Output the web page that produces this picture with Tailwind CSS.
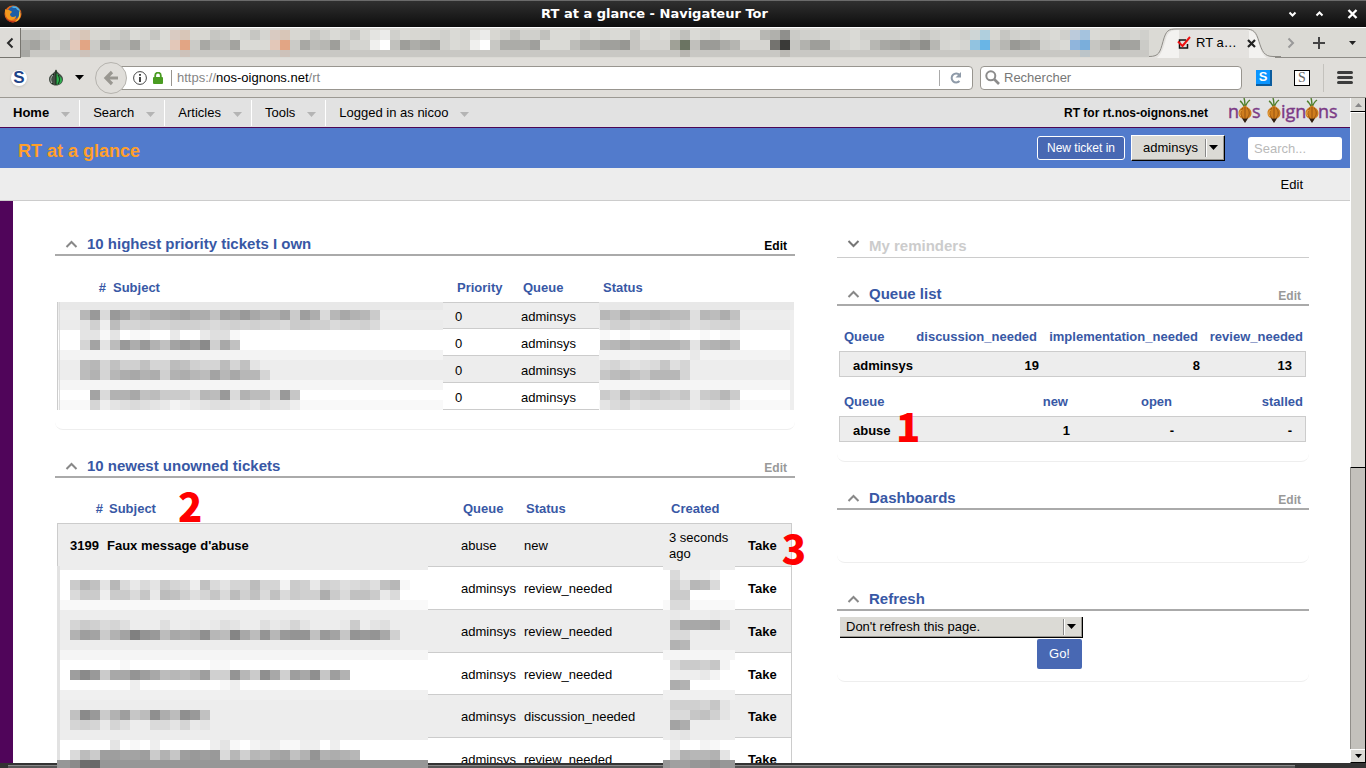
<!DOCTYPE html>
<html lang="fr">
<head>
<meta charset="utf-8">
<title>RT at a glance</title>
<script src="https://cdn.jsdelivr.net/npm/@tailwindcss/browser@4"></script>
</head>
<body class="flex h-screen flex-col overflow-hidden bg-white font-['Liberation_Sans',Arial,sans-serif] text-[13px] leading-4 text-black">

<!-- Window title bar -->
<header class="flex h-[27px] shrink-0 items-center border-t border-[#6b6b6b] bg-linear-to-b from-[#303030] to-[#0e0e0e] pr-2 pl-1">
  <svg class="size-[18px]" viewBox="0 0 18 18" aria-hidden="true">
    <circle cx="9" cy="9" r="8.5" fill="#e2691b"/>
    <circle cx="10" cy="7.500" r="6.300" fill="#1d5fa8"/>
    <path d="M7 2c3-2 8 0 9 4-2-1-3-1-4-3-1 0-3 0-5-1z" fill="#4fb4e8"/>
    <path d="M1 4c1 1 2 1 4 1 1 1 3 1 3 2l-2 2c0 3 3 4 6 2 0 3-3 4-5 4-4 0-6-4-6-11z" fill="#f39a1e"/>
    <path d="M15 5c3 5 1 11-5 12 3-1 6-4 5-12z" fill="#fbd23c"/>
    <path d="M2 12c2 4 6 5 10 4-3 3-9 1-10-4z" fill="#b92d16"/>
  </svg>
  <h1 class="grow text-center font-['DejaVu_Sans',sans-serif] text-[13px] font-bold text-white">RT at a glance - Navigateur Tor</h1>
  <div class="flex items-center gap-4 text-white">
    <button aria-label="Réduire"><svg class="h-3 w-[11px]" viewBox="0 0 11 12" fill="none" stroke="currentColor" stroke-width="2"><path d="M2.500 4.500 5.500 7.500 8.500 4.500"/></svg></button>
    <button aria-label="Agrandir"><svg class="h-3 w-[11px]" viewBox="0 0 11 12" fill="none" stroke="currentColor" stroke-width="2"><path d="M2.500 7.500 5.500 4.500 8.500 7.500"/></svg></button>
    <button class="ml-1.5" aria-label="Fermer"><svg class="h-3 w-[11px]" viewBox="0 0 11 12" fill="none" stroke="currentColor" stroke-width="2.400"><path d="M1.500 2 9.500 10M9.500 2 1.500 10"/></svg></button>
  </div>
</header>

<!-- Tab strip -->
<div class="relative flex h-[31px] shrink-0 border-t border-white bg-[#dbdad5]">
  <button class="flex w-[21px] shrink-0 items-center justify-center border-r border-b border-[#77756f] bg-[#dedcd8]" aria-label="Onglets précédents">
    <svg class="h-3 w-2" viewBox="0 0 8 12" fill="none" stroke="#2b2b2b" stroke-width="2"><path d="M6.500 1.500 2 6l4.500 4.500"/></svg>
  </button>
  <svg id="tabs" class="mt-0.5 h-[27px] w-[1128px] shrink-0" viewBox="21 30 1128 27" shape-rendering="crispEdges" aria-hidden="true"></svg>
  <div class="relative flex h-[30px] w-[126px] shrink-0 items-center pl-7">
    <svg class="absolute inset-0 h-[30px] w-[132px]" viewBox="0 0 132 30" aria-hidden="true">
      <path d="M0 28.500c10 0 11-4 14-15S19 1 28 1h68c9 0 11 3 14 12.500s5 15 14 15V30H0z" fill="#e4e2df"/>
      <path d="M8 30c5-4 7-12 9-19 1-5 4-9 11-9h2v28zM96 2c9 0 11 4 13 11s4 14 9 17h-18V2z" fill="#f3f2f0"/>
      <path d="M0 28.500c10 0 11-4 14-15S19 1 28 1h68c9 0 11 3 14 12.500s5 15 14 15h8" fill="none" stroke="#8e8c87"/>
    </svg>
    <svg class="relative size-3.5" viewBox="0 0 14 14" fill="none" aria-hidden="true"><path d="M9 4H2.500v8h8V8" stroke="#111" stroke-width="1.500"/><path d="M1 5.500 5.500 10 13 1" stroke="#e11" stroke-width="2"/></svg>
    <span class="relative ml-[5px] text-[13px]">RT a…</span>
    <button class="relative ml-2.5" aria-label="Fermer l’onglet"><svg class="size-[9px]" viewBox="0 0 9 9" stroke="#222" stroke-width="2.200"><path d="M1 1l7 7M8 1 1 8"/></svg></button>
  </div>
  <div class="relative flex grow items-center justify-end gap-[18px] border-b border-[#8e8c87] pr-2.5">
    <svg class="h-3 w-2" viewBox="0 0 8 12" fill="none" stroke="#999" stroke-width="2"><path d="M1.500 1.500 6 6l-4.500 4.500"/></svg>
    <button aria-label="Nouvel onglet"><svg class="size-3" viewBox="0 0 12 12" stroke="#444" stroke-width="2"><path d="M6 0v12M0 6h12"/></svg></button>
    <button class="ml-1.5" aria-label="Liste des onglets"><svg class="h-2 w-[7px]" viewBox="0 0 7 8" fill="#222"><path d="M0 2h7L3.500 6z"/></svg></button>
  </div>
</div>

<!-- Navigation toolbar -->
<nav class="flex h-10 shrink-0 items-center border-b border-[#9c9993] bg-[#e0deda] pr-[13px] pl-[11px]">
  <button aria-label="NoScript" class="flex size-4 items-center justify-center rounded-full bg-white text-[17px] font-bold text-[#1d4489] shadow">S</button>
  <button class="ml-[21px] flex items-center" aria-label="Tor">
    <svg class="h-[17px] w-4" viewBox="0 0 16 17"><path d="M8 0c0 4 7 5 7 10 0 4-3 6.500-7 6.500S1 14 1 10c0-5 7-6 7-10z" fill="#444d45"/><path d="M8 4c3 3 6 4 6 7s-2 4.500-6 4.500z" fill="#2fae4f"/><path d="M8 1v15M6 5c-3 3-4 7-1 10M10 6c2 3 2 6 0 9" fill="none" stroke="#102612"/><path d="M5 6c-2 2-3 5-1 8" fill="none" stroke="#c8cec9"/></svg>
    <svg class="ml-[11px] h-[5px] w-[9px]" viewBox="0 0 9 5"><path d="M0 0h9L4.500 5z"/></svg>
  </button>
  <button class="z-10 ml-[11px] flex size-8 shrink-0 items-center justify-center rounded-full border border-[#b5b3ae] bg-[#e0deda]" aria-label="Précédent">
    <svg class="size-4" viewBox="0 0 16 16" fill="none" stroke="#999791" stroke-width="3.200"><path d="M9 2 3 8l6 6M3.500 8H15"/></svg>
  </button>
  <div class="-ml-4 flex h-6 grow items-center rounded-r-sm border border-[#98958f] bg-white pl-[21px]">
    <svg class="size-3.5" viewBox="0 0 14 14" fill="none" stroke="#444" aria-hidden="true"><circle cx="7" cy="7" r="6.400"/><path d="M7 6v5M7 3v1.700" stroke-width="2"/></svg>
    <svg class="ml-1.5 h-3 w-2.5" viewBox="0 0 10 12" aria-hidden="true"><rect y="5" width="10" height="7" rx="1" fill="#4a9c22"/><path d="M2.200 6V3.500a2.800 2.800 0 0 1 5.600 0V6" fill="none" stroke="#4a9c22" stroke-width="1.800"/></svg>
    <span class="ml-2 h-4 w-px bg-[#98958f]"></span>
    <div role="textbox" contenteditable="true" aria-label="Adresse" class="grow pl-[5px] text-[#858585]">https://<span class="text-black">nos-oignons.net</span>/rt</div>
    <span class="h-4 w-px bg-[#aaa]"></span>
    <button class="mr-2.5 ml-2.5" aria-label="Recharger"><svg class="size-3" viewBox="0 0 12 12" fill="none" stroke="#8e9aa8" stroke-width="2"><path d="M9.500 9A4.500 4.500 0 1 1 9.500 3"/><path d="M11 0v5.500H5.500z" fill="#8e9aa8" stroke="none"/></svg></button>
  </div>
  <label class="ml-[7px] flex h-6 w-[262px] items-center rounded-sm border border-[#98958f] bg-white pl-1">
    <svg class="size-[15px]" viewBox="0 0 15 15" fill="none" stroke="#8c8c8c" stroke-width="2" aria-hidden="true"><circle cx="5.800" cy="5.800" r="4.500"/><path d="m9 9 5 5" stroke-width="2.600"/></svg>
    <input class="ml-1 grow bg-transparent outline-none placeholder:text-[#777]" type="search" placeholder="Rechercher" aria-label="Rechercher">
  </label>
  <button class="ml-3.5 flex size-4 items-center justify-center border-r-2 border-b-2 border-[#0b5c9e] bg-[#0a95ff] text-[13px] font-bold text-white" aria-label="Scripts autorisés">S</button>
  <button class="ml-[22px] flex size-4 items-center justify-center border border-black bg-white" aria-label="Scripts bloqués"><span class="font-['Liberation_Serif',serif] text-[14px] text-[#666]">S</span></button>
  <span class="ml-[13px] h-7 w-px bg-[#c4c2bd]"></span>
  <button class="ml-[13px]" aria-label="Menu"><svg class="h-[13px] w-4" viewBox="0 0 16 13" stroke="#3c3c3c" stroke-width="3" stroke-linecap="round"><path d="M1.500 1.500h13M1.500 6.500h13M1.500 11.500h13"/></svg></button>
</nav>

<div class="flex min-h-0 grow">
  <div class="flex min-w-0 grow flex-col">

    <!-- RT menu -->
    <div class="flex h-[30px] shrink-0 items-center border-b border-[#4d0754] bg-[#e2e2e2] pr-3">
      <ul class="flex">
        <li><a href="#" class="flex h-[26px] items-center gap-3 border-r border-white pr-[9px] pl-[13px] font-bold">Home<svg class="mt-1 h-[5px] w-[9px]" viewBox="0 0 9 5" fill="#b4b4b4"><path d="M0 0h9L4.500 5z"/></svg></a></li>
        <li><a href="#" class="flex h-[26px] items-center gap-3 border-r border-white pr-[9px] pl-[13px]">Search<svg class="mt-1 h-[5px] w-[9px]" viewBox="0 0 9 5" fill="#b4b4b4"><path d="M0 0h9L4.500 5z"/></svg></a></li>
        <li><a href="#" class="flex h-[26px] items-center gap-3 border-r border-white pr-[9px] pl-[13px]">Articles<svg class="mt-1 h-[5px] w-[9px]" viewBox="0 0 9 5" fill="#b4b4b4"><path d="M0 0h9L4.500 5z"/></svg></a></li>
        <li><a href="#" class="flex h-[26px] items-center gap-3 border-r border-white pr-[9px] pl-[13px]">Tools<svg class="mt-1 h-[5px] w-[9px]" viewBox="0 0 9 5" fill="#b4b4b4"><path d="M0 0h9L4.500 5z"/></svg></a></li>
        <li><a href="#" class="flex h-[26px] items-center gap-3 pr-[9px] pl-[13px]">Logged in as nicoo<svg class="mt-1 h-[5px] w-[9px]" viewBox="0 0 9 5" fill="#b4b4b4"><path d="M0 0h9L4.500 5z"/></svg></a></li>
      </ul>
      <strong class="ml-auto text-[12px]">RT for rt.nos-oignons.net</strong>
      <svg class="ml-5 h-[29px] w-[110px]" viewBox="0 0 110 29" role="img" aria-label="Nos oignons">
        <defs>
          <g id="onion">
            <path d="M7 10C5 6 4 4 2 3M7 10C7 5 7 3 6 0M7 10c1-4 2-6 5-8" fill="none" stroke="#4f7f2c" stroke-width="1.400"/>
            <path d="M7 7c1 2 6.500 3 6.500 8 0 4-3 6-6.500 6s-6.500-2-6.500-6c0-5 5.500-6 6.500-8z" fill="#cf7d1d"/>
            <path d="M5 10c-3 3-3 7 0 10M7 9v12M9 10c3 3 3 7 0 10" fill="none" stroke="#8a4a10" stroke-width=".8"/>
            <path d="M3.500 12c-2 2-2 4-1 6" fill="none" stroke="#f2b14e"/>
            <path d="M4 20c2 1 4 1 6 0l-1 2-2 3-2-3z" fill="#2d1c10"/>
          </g>
        </defs>
        <g fill="#7b3a86" stroke="#7b3a86" stroke-width=".4" font-family="Open Sans, Liberation Sans, sans-serif" font-size="18">
          <text x="0" y="20">n</text><text x="24" y="20">s</text><text x="53" y="20">ign</text><text x="90" y="20">ns</text>
        </g>
        <use href="#onion" x="10"/><use href="#onion" x="39"/><use href="#onion" x="77"/>
      </svg>
    </div>

    <!-- Page header -->
    <div class="flex h-10 shrink-0 items-center bg-[#527bcc] pr-2 pl-[18px]">
      <h2 class="mt-1.5 grow text-[18px] leading-6 font-bold text-[#ff9f2b]">RT at a glance</h2>
      <button class="h-6 w-[88px] rounded-[3px] border border-white bg-[#4868b3] text-[12px] text-white">New ticket in</button>
      <span class="relative ml-1.5">
        <select aria-label="Queue" class="block h-[26px] w-[94px] appearance-none border border-t-white border-r-black border-b-black border-l-white bg-[#dbdad5] pl-[11px] shadow-[inset_-1px_-1px_0_#9a9892]"><option>adminsys</option><option>abuse</option></select>
        <svg class="pointer-events-none absolute top-1 right-1 h-[18px] w-4" viewBox="0 0 16 18" aria-hidden="true"><path d="M.5 0v18" stroke="#888"/><path d="M1.500 0v18" stroke="#fff"/><path d="M4 6h9L8.500 11z"/></svg>
      </span>
      <input type="search" placeholder="Search..." aria-label="Search" class="ml-[23px] h-[23px] w-[94px] rounded-[3px] bg-white px-1.5 outline-none placeholder:text-[#b9b9b9]">
    </div>
    <div class="flex h-[33px] shrink-0 items-center justify-end border-b border-[#ccc] bg-[#ededed] pt-0.5 pr-[47px]"><a href="#">Edit</a></div>

    <!-- Dashboard -->
    <main class="grid min-h-0 grow grid-cols-[740fr_472fr] content-start gap-x-[42px] border-l-[13px] border-[#50055a] pt-[33px] pr-[41px] pl-[42px] [&_th]:pt-0.5">
      <div>
        <section class="rounded-b-lg border-b border-[#eee] pb-[19px]">
          <div class="flex items-end border-b-2 border-[#aaa] pr-2 pl-2.5">
            <svg class="mb-1.5 h-2 w-[13px]" viewBox="0 0 13 8" fill="none" stroke="#888" stroke-width="2"><path d="M1.500 7 6.500 2l5 5"/></svg>
            <h3 class="ml-[9px] grow text-[15px] leading-5 font-bold text-[#3858a5]">10 highest priority tickets I own</h3>
            <a href="#" class="text-[12px] font-bold">Edit</a>
          </div>
          <div class="relative mt-4 mr-px ml-0.5">
            <table class="w-full table-fixed border-separate border-spacing-0 border-b border-[#ccc] text-left">
              <colgroup><col class="w-[49px]"><col><col class="w-[66px]"><col class="w-20"><col class="w-[197px]"></colgroup>
              <thead class="text-[#3858a5]"><tr class="h-[30px]"><th class="text-right">#</th><th class="pl-[7px]">Subject</th><th class="pl-1.5">Priority</th><th class="pl-1.5">Queue</th><th class="pl-1.5">Status</th></tr></thead>
              <tbody class="[&_td]:border-t [&_td]:border-[#ccc] [&_td]:pt-[3px] [&_td]:pl-1 [&_tr:nth-child(odd)]:bg-[#ededed]">
                <tr class="h-[26px]"><td></td><td></td><td>0</td><td>adminsys</td><td></td></tr>
                <tr class="h-[27px]"><td></td><td></td><td>0</td><td>adminsys</td><td></td></tr>
                <tr class="h-[27px]"><td></td><td></td><td>0</td><td>adminsys</td><td></td></tr>
                <tr class="h-[27px]"><td></td><td></td><td>0</td><td>adminsys</td><td></td></tr>
              </tbody>
            </table>
            <svg id="own-subject" class="absolute top-[30px] left-0 h-[108px] w-[386px]" viewBox="57 302 386 108" shape-rendering="crispEdges" aria-hidden="true"></svg>
            <svg id="own-status" class="absolute top-[30px] right-0 h-[108px] w-[195px]" viewBox="599 302 195 108" shape-rendering="crispEdges" aria-hidden="true"></svg>
          </div>
        </section>

        <section class="mt-[26px]">
          <div class="flex items-end border-b-2 border-[#aaa] pr-2 pl-2.5">
            <svg class="mb-1.5 h-2 w-[13px]" viewBox="0 0 13 8" fill="none" stroke="#888" stroke-width="2"><path d="M1.500 7 6.500 2l5 5"/></svg>
            <h3 class="ml-[9px] grow text-[15px] leading-5 font-bold text-[#3858a5]">10 newest unowned tickets</h3>
            <a href="#" class="text-[12px] font-bold text-[#999]">Edit</a>
          </div>
          <div class="relative mt-[15px] mr-[3px] ml-0.5">
            <table class="w-full table-fixed border-separate border-spacing-0 text-left">
              <colgroup><col class="w-[46px]"><col><col class="w-[63px]"><col class="w-[145px]"><col class="w-[79px]"><col class="w-12"></colgroup>
              <thead class="text-[#3858a5]"><tr class="h-[30px]"><th class="text-right">#</th><th class="pl-1.5">Subject</th><th class="pl-1.5">Queue</th><th class="pl-1.5">Status</th><th class="pl-1.5">Created</th><th></th></tr></thead>
              <tbody class="[&_td]:border-t [&_td]:border-[#ccc] [&_td]:pt-0.5 [&_td]:pl-1 [&_td:first-child]:border-l [&_td:last-child]:border-r [&_td:last-child]:font-bold [&_tr:nth-child(odd)]:bg-[#ededed]">
                <tr class="h-[43px]"><td class="pr-1 text-right font-bold">3199</td><td class="font-bold"><a href="#">Faux message d'abuse</a></td><td>abuse</td><td>new</td><td class="pr-2">3 seconds ago</td><td><a href="#">Take</a></td></tr>
                <tr class="h-[43px]"><td></td><td></td><td>adminsys</td><td>review_needed</td><td></td><td><a href="#">Take</a></td></tr>
                <tr class="h-[43px]"><td></td><td></td><td>adminsys</td><td>review_needed</td><td></td><td><a href="#">Take</a></td></tr>
                <tr class="h-[42px]"><td></td><td></td><td>adminsys</td><td>review_needed</td><td></td><td><a href="#">Take</a></td></tr>
                <tr class="h-[43px]"><td></td><td></td><td>adminsys</td><td>discussion_needed</td><td></td><td><a href="#">Take</a></td></tr>
                <tr class="h-[43px]"><td></td><td></td><td>adminsys</td><td>review_needed</td><td></td><td><a href="#">Take</a></td></tr>
              </tbody>
            </table>
            <svg id="new-subject" class="absolute top-[73px] left-0 z-10 h-[202px] w-[371px]" viewBox="57 566 371 202" shape-rendering="crispEdges" aria-hidden="true"></svg>
            <svg id="new-created" class="absolute top-[73px] right-[57px] z-10 h-[202px] w-[72px]" viewBox="663 566 72 202" shape-rendering="crispEdges" aria-hidden="true"></svg>
            <b class="absolute -top-2.5 left-[121px] font-['Noto_Sans_CJK_SC',sans-serif] text-[40px] leading-[44px] font-black text-[#f00]">2</b>
            <b class="absolute top-8 -right-3.5 font-['Noto_Sans_CJK_SC',sans-serif] text-[40px] leading-[44px] font-black text-[#f00]">3</b>
          </div>
        </section>
      </div>

      <div class="pt-0.5">
        <section class="flex items-center border-b border-[#ccc] pb-px pl-2.5">
          <svg class="mb-1 h-2 w-[13px]" viewBox="0 0 13 8" fill="none" stroke="#777" stroke-width="2"><path d="m1.500 1 5 5 5-5"/></svg>
          <h3 class="ml-[9px] text-[15px] leading-5 font-bold text-[#ccc]">My reminders</h3>
        </section>

        <section class="mt-[26px] rounded-b-lg border-b border-[#eee] pb-[19px]">
          <div class="flex items-end border-b-2 border-[#aaa] pr-2 pl-2.5">
            <svg class="mb-1.5 h-2 w-[13px]" viewBox="0 0 13 8" fill="none" stroke="#888" stroke-width="2"><path d="M1.500 7 6.500 2l5 5"/></svg>
            <h3 class="ml-[9px] grow text-[15px] leading-5 font-bold text-[#3858a5]">Queue list</h3>
            <a href="#" class="text-[12px] font-bold text-[#999]">Edit</a>
          </div>
          <div class="mt-[15px] mr-[3px] ml-0.5 [&_td]:border-y [&_td]:border-[#ccc] [&_td]:bg-[#ededed] [&_td]:pt-1 [&_td]:pr-0.5 [&_td]:font-bold [&_td:first-child]:border-l [&_td:first-child]:pl-[13px] [&_td:first-child]:text-left [&_td:last-child]:border-r [&_td:last-child]:pr-[13px] [&_th]:pr-1 [&_th]:text-[#3858a5] [&_th:first-child]:pl-[5px] [&_th:first-child]:text-left [&_th:last-child]:pr-[3px]">
            <table class="w-full table-fixed border-separate border-spacing-0 text-right">
              <colgroup><col><col class="w-[130px]"><col class="w-[161px]"><col class="w-[104px]"></colgroup>
              <thead><tr class="h-[30px]"><th>Queue</th><th>discussion_needed</th><th>implementation_needed</th><th>review_needed</th></tr></thead>
              <tbody><tr class="h-[26px]"><td>adminsys</td><td>19</td><td>8</td><td>13</td></tr></tbody>
            </table>
            <div class="relative mt-[9px]">
              <table class="w-full table-fixed border-separate border-spacing-0 text-right">
                <colgroup><col><col class="w-[130px]"><col class="w-[104px]"><col class="w-[130px]"></colgroup>
                <thead><tr class="h-[30px]"><th>Queue</th><th>new</th><th>open</th><th>stalled</th></tr></thead>
                <tbody><tr class="h-[26px]"><td>abuse</td><td>1</td><td>-</td><td>-</td></tr></tbody>
              </table>
              <b class="absolute top-[17px] left-[57px] font-['Noto_Sans_CJK_SC',sans-serif] text-[40px] leading-[44px] font-black text-[#f00]">1</b>
            </div>
          </div>
        </section>

        <section class="mt-[26px] rounded-b-lg border-b border-[#eee] pb-[52px]">
          <div class="flex items-end border-b-2 border-[#aaa] pr-2 pl-2.5">
            <svg class="mb-1.5 h-2 w-[13px]" viewBox="0 0 13 8" fill="none" stroke="#888" stroke-width="2"><path d="M1.500 7 6.500 2l5 5"/></svg>
            <h3 class="ml-[9px] grow text-[15px] leading-5 font-bold text-[#3858a5]">Dashboards</h3>
            <a href="#" class="text-[12px] font-bold text-[#999]">Edit</a>
          </div>
        </section>

        <section class="mt-[26px] rounded-b-lg border-b border-[#eee] pb-3">
          <div class="flex items-end border-b-2 border-[#aaa] pr-2 pl-2.5">
            <svg class="mb-1.5 h-2 w-[13px]" viewBox="0 0 13 8" fill="none" stroke="#888" stroke-width="2"><path d="M1.500 7 6.500 2l5 5"/></svg>
            <h3 class="ml-[9px] grow text-[15px] leading-5 font-bold text-[#3858a5]">Refresh</h3>
          </div>
          <form class="mt-1.5 ml-[3px] flex w-[243px] flex-col items-end gap-px">
            <span class="relative w-full">
              <select aria-label="Refresh" class="block h-[21px] w-full appearance-none border-r border-b border-black bg-[#dbdad5] pl-1.5 shadow-[inset_-1px_-1px_0_#9a9892]"><option>Don't refresh this page.</option></select>
              <svg class="pointer-events-none absolute top-0.5 right-1 h-4 w-4" viewBox="0 0 16 16" aria-hidden="true"><path d="M.5 0v16" stroke="#888"/><path d="M1.500 0v16" stroke="#fff"/><path d="M4 5h9L8.500 10z"/></svg>
            </span>
            <button type="button" class="mr-px h-[30px] w-[45px] rounded-xs bg-[#4868b3] text-[13px] text-white">Go!</button>
          </form>
        </section>
      </div>
    </main>
  </div>

  <!-- Scrollbar -->
  <div class="mb-[5px] flex w-4 shrink-0 flex-col border-r border-black bg-[#c3c1bc]">
    <div class="flex h-3.5 items-center justify-center border-b border-l border-b-black border-l-white bg-[#dbdad5]"><svg class="h-1 w-[7px]" viewBox="0 0 7 4" fill="#888"><path d="M0 4h7L3.500 0z"/></svg></div>
    <div class="h-[356px] border-t border-b border-l border-t-white border-b-black border-l-white bg-[#dbdad5]"></div>
    <div class="grow border-l border-[#908e89]"></div>
    <div class="flex h-3.5 items-center justify-center border-t border-b border-l border-t-white border-b-black border-l-white bg-[#dbdad5]"><svg class="h-1 w-[7px]" viewBox="0 0 7 4"><path d="M0 0h7L3.500 4z"/></svg></div>
  </div>
</div>

<!-- Lower window frame, drawn over the page -->
<div class="fixed inset-x-0 bottom-0 flex h-[5px] border-t-2 border-[#333] bg-[#333]"><div class="ml-2 grow border-t border-[#888] bg-[#575757]"></div><div class="w-[71px]"></div></div>

<script>
// Pixelated regions. Each letter is a 10px cell: a = darkest grey, z = white, "." = empty.
function rect(svg, x, y, w, h, fill) {
  const r = document.createElementNS('http://www.w3.org/2000/svg', 'rect');
  r.setAttribute('x', x); r.setAttribute('y', y);
  r.setAttribute('width', w); r.setAttribute('height', h);
  r.setAttribute('fill', fill);
  svg.appendChild(r);
}
function mosaic(id, bands, rows, extra) {
  const svg = document.getElementById(id);
  const box = svg.viewBox.baseVal;
  bands.forEach(([y, h, c]) => rect(svg, box.x, y, box.width, h, c));
  rows.forEach(([x, y, s]) => [...s].forEach((ch, i) => {
    if (ch === '.') return;
    const g = ch === 'z' ? 255 : 128 + (ch.charCodeAt(0) - 97) * 5;
    rect(svg, x + i * 10, y, 10, 10, `rgb(${g},${g},${g - (id === 'tabs' && g < 250 ? 4 : 0)})`);
  }));
  (extra || []).forEach(e => rect(svg, ...e));
}
const ownBands = [[302,8,'#e8e8e8'],[310,10,'#ededed'],[320,10,'#ebebeb'],[330,20,'#fff'],[350,10,'#f3f3f3'],[360,20,'#ededed'],[380,10,'#f5f5f5'],[390,10,'#fff'],[400,10,'#f9f9f9']];
mosaic('own-subject', ownBands, [
  [80,310,'lfsfhmljjihjjnhifikkhpgjsliklp'],
  [80,320,'uqwmrrqrrqqqrsrqrqrrsppqqsrrqs'],
  [80,330,'uuyuzyyzzvzzvtty'],
  [80,340,'rhumfjfknhfhcqin'],
  [80,360,'mlrnqqnrrmnqrrmrnu'],
  [80,370,'mkrljikjqkjlmhlillr'],
  [90,390,'hskkinmpppslmfskmmsfo'],
  [90,400,'rwutstuvxwvuttuuvtuuw']
], [[57,302,1,108,'#ccc'],[59,302,1,108,'#ddd']]);
mosaic('own-status', ownBands, [
  [600,310,'lnjllklmmtlmjn'],
  [600,320,'sqqsrsrqrtsrrq'],
  [600,330,'yzyzzyyzz.yzyy'],
  [600,340,'mljlkkkkmulkjn'],
  [690,350,'v'],
  [600,360,'srtutsotr'],
  [600,370,'omlnplllr'],
  [600,390,'prlponpqovpolp'],
  [600,400,'usrutttttvuttw']
], [[790,310,4,100,'#eee']]);
const newBands = [[566,4,'#ededed'],[570,30,'#fff'],[600,10,'#f9f9f9'],[610,40,'#ededed'],[650,10,'#f5f5f5'],[660,30,'#fff'],[690,10,'#f0f0f0'],[700,40,'#ededed'],[740,20,'#fff'],[760,8,'#979797']];
mosaic('new-subject', newBands, [
  [70,580,'plnulsvsuprswnsurrmrrxpqvqrtsrtnly'],
  [70,590,'sppwppsovmnqtrosmqnsnspqqjpsnnpvs'],
  [70,620,'rpqsrt...t..v.vtu..tvuru...vp.ut'],
  [70,630,'kghpkhaefmijidlmbimelfeenfhoefeiq'],
  [120,660,'y........yy'],
  [70,670,'gcfpiiegimlmkgqqelpdiqgidogk'],
  [130,680,'w........yw'],
  [70,710,'ncfpkgomdjmdfn'],
  [70,720,'rqrvrt..ssurvu'],
  [110,740,'u.y.w.....wuy.xwwyyww.w'],
  [70,750,'smpgghhgpkogfgfslqlmihnkekjkl']
], [[57,566,3,194,'#e2e2e2'],[70,760,10,8,'#8a8a8a'],[80,760,10,8,'#6d6d6d'],[90,760,10,8,'#696969']]);
mosaic('new-created', newBands, [
  [670,570,'swwwx'],[670,580,'qtlms'],[670,590,'pp'],[670,600,'ss'],
  [670,610,'v...v'],[670,620,'niiihs'],[670,630,'ss'],[670,640,'kl'],
  [670,660,'sppqox'],[670,670,'wwwvxz'],[670,680,'jk'],
  [670,700,'qqqrou'],[670,710,'ssonqu'],[670,720,'hj'],[670,730,'vu'],
  [670,740,'w..xy'],[670,750,'rkllku']
], [[670,760,20,8,'#a0a0a0'],[710,760,10,8,'#8e8e8e']]);
mosaic('tabs', [[30,10,'#d8d7d2'],[40,10,'#d6d5d0'],[50,7,'#c9c8c4']], [
  [20,30,'nnorsqr..qosrosqs..opsrorqr..oqsrosrrqs..rqsrs..qnqqnsssqsrssosrsqosrqssssl.qpqqrrrsqqqqrqoqrrqss.oqrqrsqsos..qrqrosrr'.slice(0,113)],
  [20,40,'jhmsn..pimmhpss..pimmhsss..pimlgprr..ngjhgqs'],
  [490,40,'njjigsssmjjhgfnssrh.nffjkprq'],
  [790,40,'okggqrsrlihfhdlrsr..olfhiqrs..omfhhp'],
  [20,50,'i']
], [
  [490,40,10,10,'#c8c8c4'],[500,40,40,10,'#acaca8'],[530,40,10,10,'#9f9f9c'],[570,40,10,10,'#bdbdb9'],[580,40,20,10,'#acaca8'],[600,40,20,10,'#a0a09c'],[620,40,10,10,'#979793'],[630,40,10,10,'#c6c5c1'],[640,40,30,10,'#d5d4d0'],[670,40,10,10,'#a0a197'],[690,40,10,10,'#c1c0bc'],[700,40,20,10,'#9b9b97'],[720,40,10,10,'#acaca8'],[730,40,10,10,'#b5b5b1'],[740,40,30,10,'#d6d5d1'],
  [70,30,10,10,'#d9cbc2'],[80,30,10,10,'#d8c6b8'],[170,30,10,10,'#d9cbc2'],[180,30,10,10,'#d8c6b8'],[270,30,10,10,'#d9cbc2'],[280,30,10,10,'#d8c6b8'],
  [70,40,10,10,'#e3c8b9'],[80,40,10,10,'#e2a584'],[170,40,10,10,'#e3c8b9'],[180,40,10,10,'#e2a584'],[270,40,10,10,'#e3c8b9'],[280,40,10,10,'#e2a584'],
  [80,50,10,7,'#cdc2ba'],[180,50,10,7,'#cdc2ba'],[280,50,10,7,'#cdc2ba'],
  [370,30,10,10,'#e4e4e1'],[380,30,10,10,'#ebebea'],[370,40,10,10,'#f0f0ee'],[380,40,10,10,'#fff'],
  [470,30,10,10,'#e4e4e1'],[480,30,10,10,'#ebebea'],[470,40,10,10,'#f0f0ee'],[480,40,10,10,'#fff'],
  [680,30,10,10,'#c0c0bc'],[680,40,10,10,'#6b7462'],[680,50,10,7,'#b8b6b1'],
  [770,30,10,10,'#b0b0ac'],[780,30,10,10,'#8f8f8c'],[770,40,10,10,'#74736f'],[780,40,10,10,'#3a3a38'],[780,50,10,7,'#bbb9b4'],
  [970,30,10,10,'#cfd6d6'],[980,30,10,10,'#b0cfdd'],[970,40,10,10,'#92c3e0'],[980,40,10,10,'#69b5e6'],
  [1070,30,10,10,'#bccbdb'],[1080,30,10,10,'#a5c3de'],[1070,40,10,10,'#90b5dc'],[1080,40,10,10,'#7aaedb'],[1080,50,10,7,'#bcc4c8']
]);
</script>
</body>
</html>
